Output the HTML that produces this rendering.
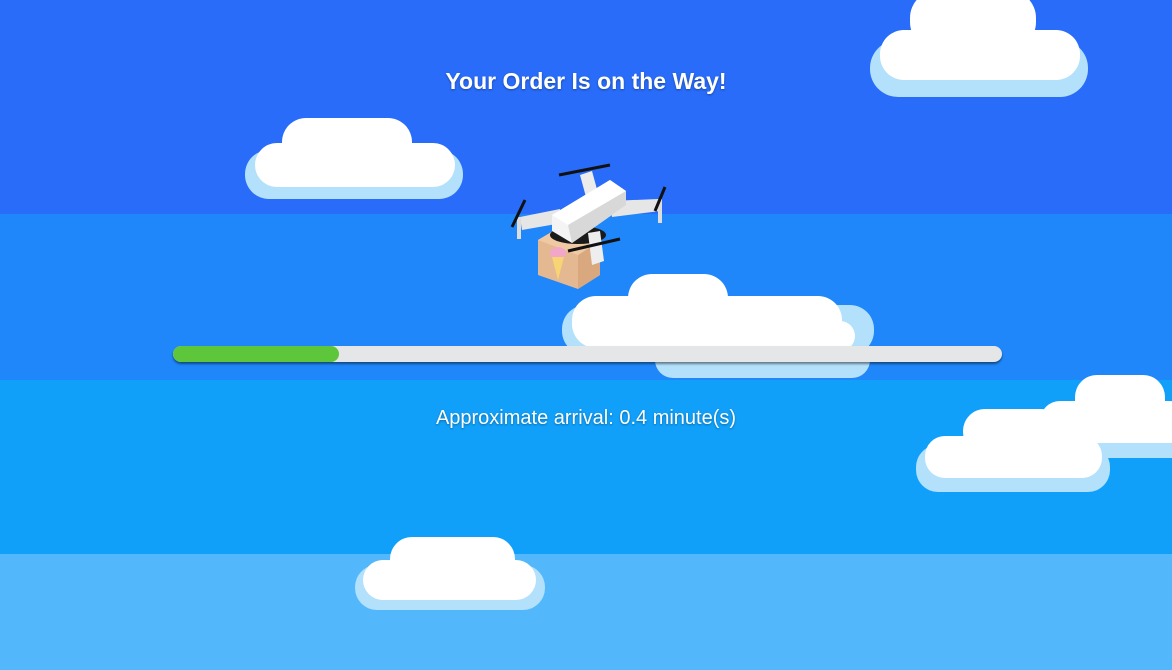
<!DOCTYPE html>
<html><head><meta charset="utf-8"><style>
html,body{margin:0;padding:0}
body{width:1172px;height:670px;position:relative;overflow:hidden;font-family:"Liberation Sans",sans-serif;background:#52b7fb}
.b{position:absolute;left:0;width:1172px}
.w,.s{position:absolute}
.w{background:#fff}
.s{background:#b3e0fb}
.t{position:absolute;left:0;width:1172px;text-align:center;color:#fff;text-shadow:0 1px 2px rgba(0,0,0,.35)}
</style></head><body>
<div class="b" style="top:0;height:214px;background:#296cf9"></div>
<div class="b" style="top:214px;height:166px;background:#1f87f9"></div>
<div class="b" style="top:380px;height:174px;background:#10a0fa"></div>
<div class="b" style="top:554px;height:116px;background:#52b7fb"></div>

<div class="s" style="left:870px;top:40px;width:218px;height:57px;border-radius:28px"></div>
<div class="w" style="left:910px;top:-10px;width:126px;height:60px;border-radius:28px"></div>
<div class="w" style="left:880px;top:30px;width:200px;height:50px;border-radius:24px"></div>

<div class="s" style="left:245px;top:150px;width:218px;height:49px;border-radius:24px"></div>
<div class="w" style="left:282px;top:118px;width:130px;height:50px;border-radius:24px"></div>
<div class="w" style="left:255px;top:143px;width:200px;height:44px;border-radius:22px"></div>

<div class="s" style="left:562px;top:305px;width:312px;height:50px;border-radius:24px"></div>
<div class="s" style="left:655px;top:340px;width:215px;height:38px;border-radius:18px"></div>
<div class="w" style="left:628px;top:274px;width:100px;height:50px;border-radius:24px"></div>
<div class="w" style="left:728px;top:298px;width:92px;height:40px;border-radius:20px"></div>
<div class="w" style="left:572px;top:296px;width:270px;height:52px;border-radius:24px"></div>
<div class="w" style="left:790px;top:321px;width:65px;height:30px;border-radius:16px"></div>

<div style="position:absolute;left:173px;top:346px;width:829px;height:16px;border-radius:8px;background:#e4e6e8;box-shadow:0 2px 2px rgba(0,0,0,.45)"></div>
<div style="position:absolute;left:173px;top:346px;width:166px;height:16px;border-radius:8px;background:#5ec63a"></div>

<div class="s" style="left:1050px;top:415px;width:140px;height:43px;border-radius:18px"></div>
<div class="s" style="left:916px;top:445px;width:194px;height:47px;border-radius:22px"></div>
<div class="w" style="left:1075px;top:375px;width:90px;height:50px;border-radius:22px"></div>
<div class="w" style="left:1040px;top:401px;width:150px;height:42px;border-radius:20px"></div>
<div class="w" style="left:963px;top:409px;width:100px;height:45px;border-radius:22px"></div>
<div class="w" style="left:925px;top:436px;width:177px;height:42px;border-radius:20px"></div>

<div class="s" style="left:355px;top:565px;width:190px;height:45px;border-radius:22px"></div>
<div class="w" style="left:390px;top:537px;width:125px;height:48px;border-radius:22px"></div>
<div class="w" style="left:363px;top:560px;width:173px;height:40px;border-radius:20px"></div>

<div class="t" style="top:68px;font-size:23px;font-weight:bold">Your Order Is on the Way!</div>
<div class="t" style="top:407px;font-size:20px">Approximate arrival: 0.4 minute(s)</div>

<svg style="position:absolute;left:500px;top:155px" width="180" height="140" viewBox="0 0 180 140">
 <polygon points="38,85 60,72 100,86 100,120 78,134 38,120" fill="#e4b891"/>
 <polygon points="78,100 100,86 100,120 78,134" fill="#d9a87e"/>
 <polygon points="38,85 60,72 100,86 78,100" fill="#efc9a4"/>
 <ellipse cx="58" cy="98" rx="8" ry="6" fill="#f2a7c9"/>
 <polygon points="52,102 64,102 58,125" fill="#f7d575"/>
 <polygon points="20,62 60,54 62,68 22,75" fill="#e6e6e6"/>
 <polygon points="110,46 158,44 160,56 112,62" fill="#e6e6e6"/>
 <polygon points="80,20 92,16 98,38 86,42" fill="#ececec"/>
 <rect x="17" y="62" width="4" height="22" fill="#ddd"/>
 <rect x="158" y="44" width="4" height="24" fill="#ddd"/>
 <ellipse cx="78" cy="80" rx="28" ry="9" fill="#1a1a1a"/>
 <polygon points="52,60 110,25 126,36 126,50 72,88 52,76" fill="#f4f4f4"/>
 <polygon points="52,60 110,25 126,36 68,70" fill="#fff"/>
 <polygon points="68,70 126,36 126,50 72,88" fill="#d8d8d8"/>
 <polygon points="88,78 100,76 104,106 92,110" fill="#eee"/>
 <line x1="59" y1="20" x2="110" y2="10" stroke="#111" stroke-width="3"/>
 <line x1="12" y1="72" x2="25" y2="45" stroke="#111" stroke-width="3"/>
 <line x1="155" y1="56" x2="165" y2="32" stroke="#111" stroke-width="3"/>
 <line x1="68" y1="96" x2="120" y2="84" stroke="#111" stroke-width="3"/>
</svg>
</body></html>
